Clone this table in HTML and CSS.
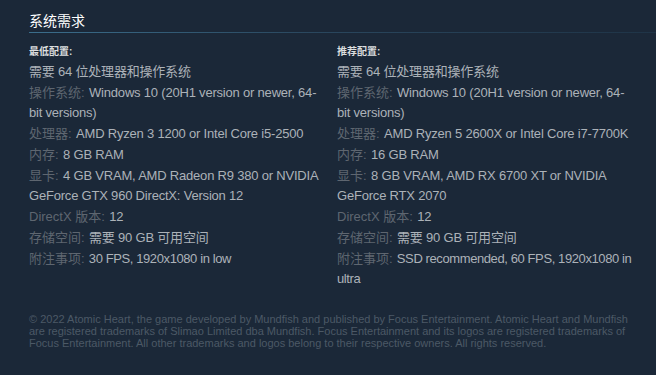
FILE: index.html
```html
<!DOCTYPE html>
<html lang="zh-CN">
<head>
<meta charset="utf-8">
<title>系统需求</title>
<link rel="stylesheet" href="styles.css">
</head>
<body>
<div class="page">
  <h2 class="section-title">系统需求</h2>
  <div class="sysreq">
    <div class="col">
      <div class="col-title">最低配置:</div>
      <ul class="req-list">
        <li>需要 64 位处理器和操作系统</li>
        <li><span class="label">操作系统:</span> Windows 10 (20H1 version or newer, 64-bit versions)</li>
        <li><span class="label">处理器:</span> AMD Ryzen 3 1200 or Intel Core i5-2500</li>
        <li><span class="label">内存:</span> 8 GB RAM</li>
        <li><span class="label">显卡:</span> 4 GB VRAM, AMD Radeon R9 380 or NVIDIA GeForce GTX 960 DirectX: Version 12</li>
        <li><span class="label">DirectX 版本:</span> 12</li>
        <li><span class="label">存储空间:</span> 需要 90 GB 可用空间</li>
        <li class="notes"><span class="label">附注事项:</span> 30 FPS, 1920x1080 in low</li>
      </ul>
    </div>
    <div class="col">
      <div class="col-title">推荐配置:</div>
      <ul class="req-list">
        <li>需要 64 位处理器和操作系统</li>
        <li><span class="label">操作系统:</span> Windows 10 (20H1 version or newer, 64-bit versions)</li>
        <li><span class="label">处理器:</span> AMD Ryzen 5 2600X or Intel Core i7-7700K</li>
        <li><span class="label">内存:</span> 16 GB RAM</li>
        <li><span class="label">显卡:</span> 8 GB VRAM, AMD RX 6700 XT or NVIDIA GeForce RTX 2070</li>
        <li><span class="label">DirectX 版本:</span> 12</li>
        <li><span class="label">存储空间:</span> 需要 90 GB 可用空间</li>
        <li class="notes"><span class="label">附注事项:</span> SSD recommended, 60 FPS, 1920x1080 in ultra</li>
      </ul>
    </div>
  </div>
  <p class="legal">© 2022 Atomic Heart, the game developed by Mundfish and published by Focus Entertainment. Atomic Heart and Mundfish are registered trademarks of Slimao Limited dba Mundfish. Focus Entertainment and its logos are registered trademarks of Focus Entertainment. All other trademarks and logos belong to their respective owners. All rights reserved.</p>
</div>
</body>
</html>
```
FILE: styles.css
```css
html, body {
  margin: 0;
  padding: 0;
  background: #1b2838;
  height: 100%;
}
body {
  font-family: "Liberation Sans", Arial, "Noto Sans CJK SC", sans-serif;
  color: #acb2b8;
}
.page {
  padding: 11px 0 0 29px;
}
.section-title {
  margin: 0;
  font-size: 14px;
  line-height: 20px;
  font-weight: normal;
  color: #ffffff;
  padding-bottom: 2px;
  background-image: linear-gradient(to right, #3b6e8c 0%, #2a475e 45%, #1f3447 100%);
  background-size: 100% 1px;
  background-repeat: no-repeat;
  background-position: left bottom;
}
.sysreq {
  display: grid;
  grid-template-columns: 296px 296px;
  column-gap: 12px;
  margin-top: 13px;
}
.col-title {
  font-size: 10px;
  line-height: 12px;
  font-weight: bold;
  color: #dcdedf;
  margin-bottom: 4px;
}
.req-list {
  list-style: none;
  margin: 0;
  padding: 0;
  font-size: 13px;
  line-height: 20px;
  letter-spacing: -0.2px;
}
.req-list li {
  margin-bottom: 1px;
}
.req-list .notes {
  letter-spacing: -0.4px;
}
.label {
  color: #5e6670;
  letter-spacing: 0;
  margin-right: 1px;
}
.legal {
  width: 604px;
  margin: 23px 0 0;
  font-family: "Liberation Sans", Arial, sans-serif;
  font-size: 11px;
  line-height: 12px;
  color: #4c5966;
}
```
